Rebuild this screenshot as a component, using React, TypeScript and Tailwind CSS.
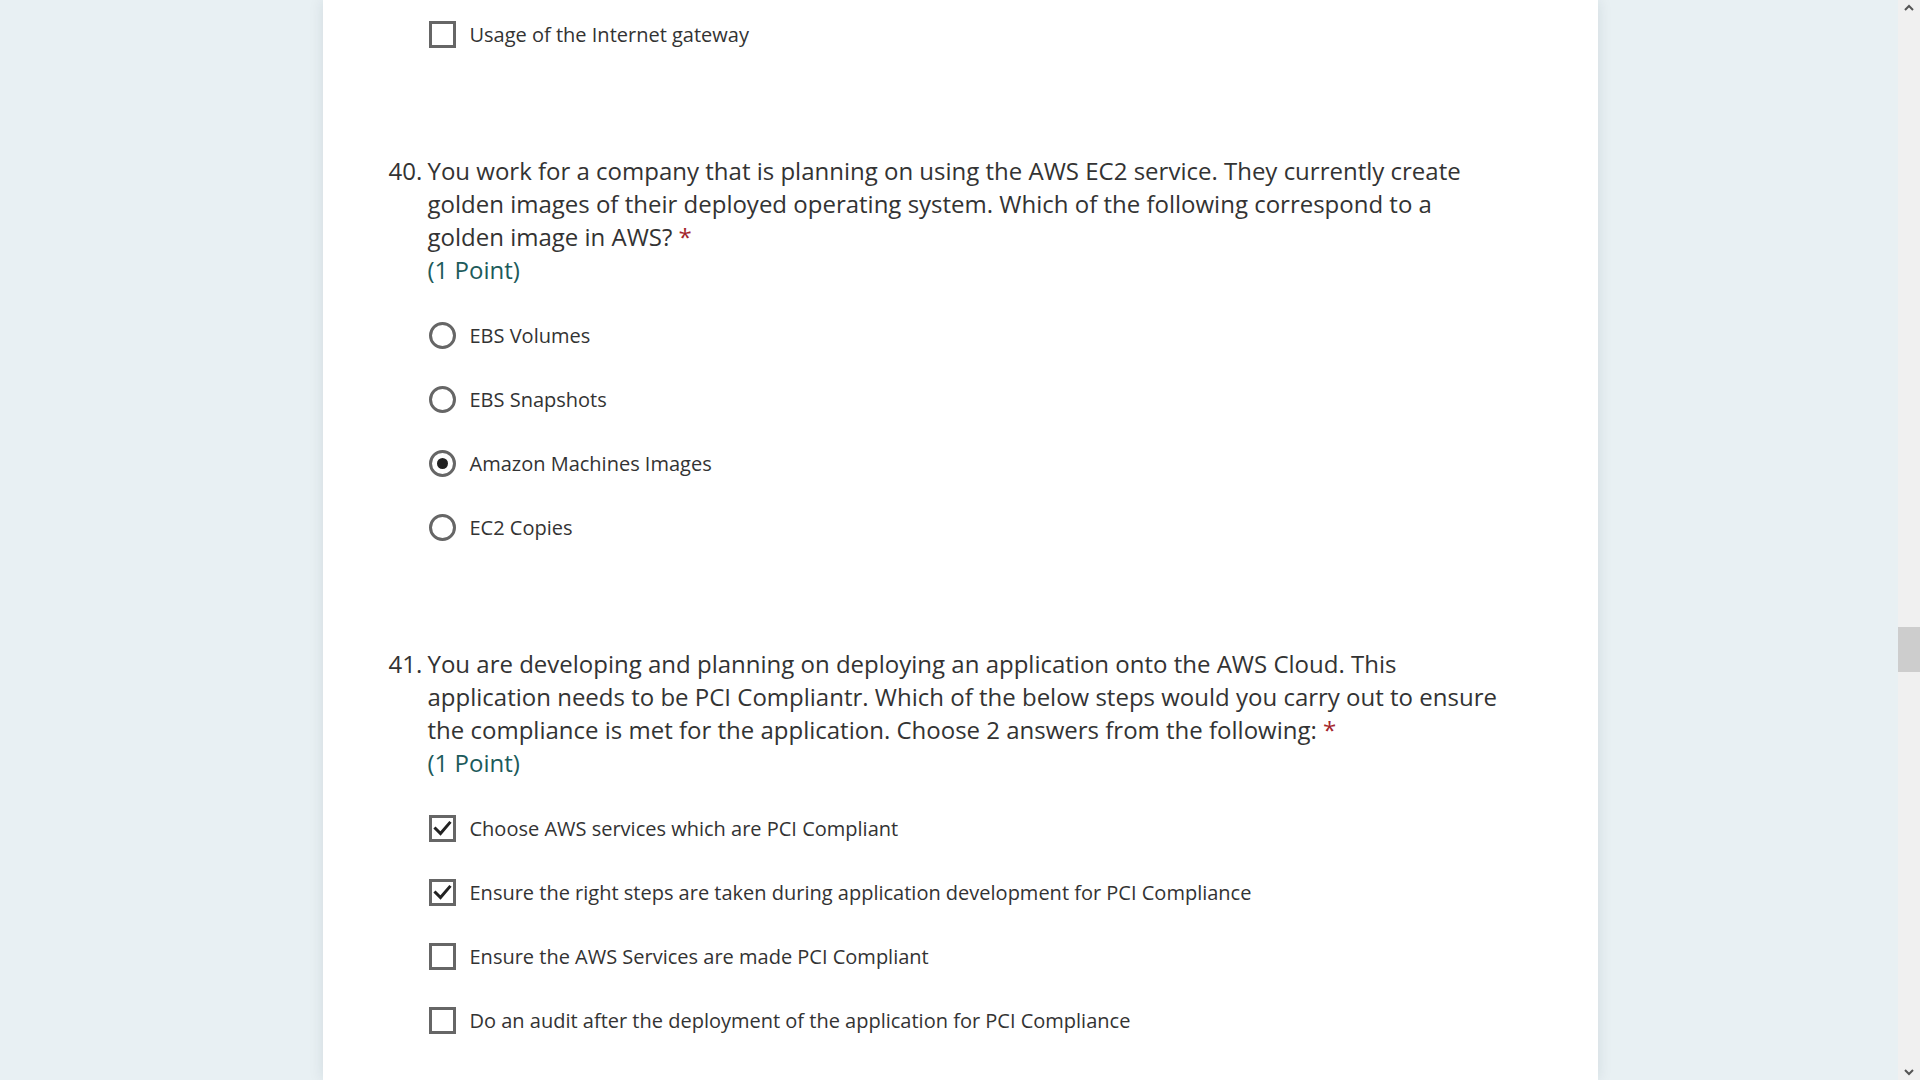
import React from 'react'

interface Question {
  num: number
  title: string
  kind: 'radio' | 'checkbox'
  options: { label: string; checked?: boolean }[]
}

const questions: Question[] = [
  {
    num: 40,
    title:
      'You work for a company that is planning on using the AWS EC2 service. They currently create golden images of their deployed operating system. Which of the following correspond to a golden image in AWS?',
    kind: 'radio',
    options: [
      { label: 'EBS Volumes' },
      { label: 'EBS Snapshots' },
      { label: 'Amazon Machines Images', checked: true },
      { label: 'EC2 Copies' },
    ],
  },
  {
    num: 41,
    title:
      'You are developing and planning on deploying an application onto the AWS Cloud. This application needs to be PCI Compliantr. Which of the below steps would you carry out to ensure the compliance is met for the application. Choose 2 answers from the following:',
    kind: 'checkbox',
    options: [
      { label: 'Choose AWS services which are PCI Compliant', checked: true },
      { label: 'Ensure the right steps are taken during application development for PCI Compliance', checked: true },
      { label: 'Ensure the AWS Services are made PCI Compliant' },
      { label: 'Do an audit after the deployment of the application for PCI Compliance' },
    ],
  },
]

function Checkbox({ checked }: { checked?: boolean }) {
  return (
    <span className="flex h-[27px] w-[27px] shrink-0 items-center justify-center border-[3px] border-[#666666] bg-white">
      {checked && (
        <svg width="19" height="19" viewBox="0 0 19 19" fill="none">
          <path d="M2.5 9.5 L7.5 14.5 L16.5 4" stroke="#222" strokeWidth="3" strokeLinecap="square" />
        </svg>
      )}
    </span>
  )
}

function Radio({ checked }: { checked?: boolean }) {
  return (
    <span className="flex h-[27px] w-[27px] shrink-0 items-center justify-center rounded-full border-[3px] border-[#666666] bg-white">
      {checked && <span className="h-[11px] w-[11px] rounded-full bg-[#222222]" />}
    </span>
  )
}

function OptionRow({ kind, label, checked }: { kind: 'radio' | 'checkbox'; label: string; checked?: boolean }) {
  return (
    <div className="flex h-[27px] items-center gap-[14px]">
      {kind === 'radio' ? <Radio checked={checked} /> : <Checkbox checked={checked} />}
      <span className="text-[20px] leading-[27px] text-[#333333]">{label}</span>
    </div>
  )
}

function QuestionBlock({ q }: { q: Question }) {
  return (
    <div className="mt-[106px] flex flex-col">
      <div className="flex text-[24px] leading-[33px] text-[#333333]">
        <span className="w-[39px] shrink-0">{q.num}.</span>
        <div className="w-[1078px]">
          <span>{q.title}</span>
          <span className="text-[#a4262c]">{'\u00a0*'}</span>
          <div className="text-[#1d5b5b]">(1 Point)</div>
        </div>
      </div>
      <div className="ml-[40px] mt-[36px] flex flex-col gap-[37px]">
        {q.options.map((o) => (
          <OptionRow key={o.label} kind={q.kind} label={o.label} checked={o.checked} />
        ))}
      </div>
    </div>
  )
}

export default function App() {
  return (
    <div className="relative h-screen w-full overflow-hidden bg-[#e8f0f3] font-['Open_Sans',sans-serif]">
      <div className="mx-auto h-full w-[1275px] bg-white pl-[66px] pt-[21px] shadow-[0_0_14px_rgba(0,40,60,0.10)]">
        <div className="ml-[40px]">
          <OptionRow kind="checkbox" label="Usage of the Internet gateway" />
        </div>
        {questions.map((q) => (
          <QuestionBlock key={q.num} q={q} />
        ))}
      </div>

      {/* fake scrollbar */}
      <div className="absolute right-0 top-0 flex h-full w-[22px] flex-col items-center justify-between bg-[#f0f0f0] py-[4px]">
        <svg width="12" height="8" viewBox="0 0 12 8">
          <path d="M2 6 L6 2 L10 6" stroke="#555" strokeWidth="2" fill="none" />
        </svg>
        <svg width="12" height="8" viewBox="0 0 12 8">
          <path d="M2 2 L6 6 L10 2" stroke="#555" strokeWidth="2" fill="none" />
        </svg>
      </div>
      <div className="absolute right-0 top-[627px] h-[45px] w-[22px] bg-[#cdcdcd]" />
    </div>
  )
}
